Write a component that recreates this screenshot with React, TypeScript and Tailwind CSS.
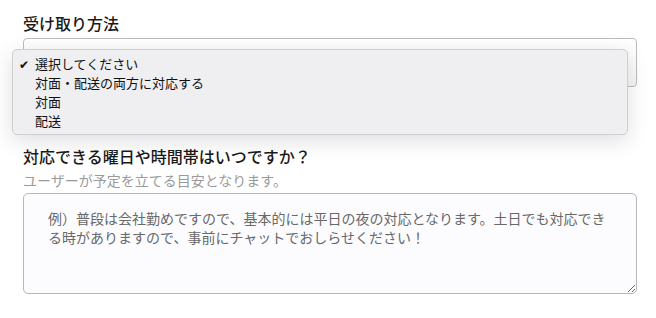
const FONT = {
  fontFamily: '"Noto Sans CJK JP", "Noto Sans", sans-serif',
};

const OPTIONS = [
  "選択してください",
  "対面・配送の両方に対応する",
  "対面",
  "配送",
];

export default function App() {
  return (
    <div
      style={FONT}
      className="w-[656px] h-[318px] overflow-hidden bg-white px-[23px] pt-[11px]"
    >
      <div className="text-[16px] font-medium leading-[24px] text-[#1a1a1a]">受け取り方法</div>

      <div className="relative mt-[3px] h-[49px] w-[614px]">
        <div className="h-full w-full rounded-[4px] border border-[#bcbcbc] bg-gradient-to-b from-white to-[#f6f6f7]" />

        {/* native select popup */}
        <div className="absolute left-[-11px] top-[11px] w-[616px] rounded-[5px] border border-[#cfcfd1] bg-[#efeef0] pt-[4px] pb-[4px] shadow-[0_6px_22px_rgba(0,0,0,0.13)]">
          {OPTIONS.map((opt, i) => (
            <div
              key={opt}
              className="flex h-[19px] items-center text-[13px] leading-[19px] text-[#111]"
            >
              <span className="w-[22px] pl-[6px] text-[12px]">
                {i === 0 ? "✔" : ""}
              </span>
              <span>{opt}</span>
            </div>
          ))}
        </div>
      </div>

      <div className="mt-[57px] text-[16px] font-medium leading-[24px] text-[#1a1a1a]">
        対応できる曜日や時間帯はいつですか？
      </div>
      <div className="mt-[2px] text-[14px] leading-[20px] text-[#9a9a9a]">
        ユーザーが予定を立てる目安となります。
      </div>

      <textarea
        style={FONT}
        className="mt-[3px] block h-[101px] w-[614px] rounded-[5px] border border-[#b8b8b8] bg-[#fcfcfe] px-[24px] pt-[15px] text-[14px] leading-[18.5px] text-[#333] placeholder:text-[#686868] outline-none"
        placeholder={
          "例）普段は会社勤めですので、基本的には平日の夜の対応となります。土日でも対応でき\nる時がありますので、事前にチャットでおしらせください！"
        }
      />
    </div>
  );
}
